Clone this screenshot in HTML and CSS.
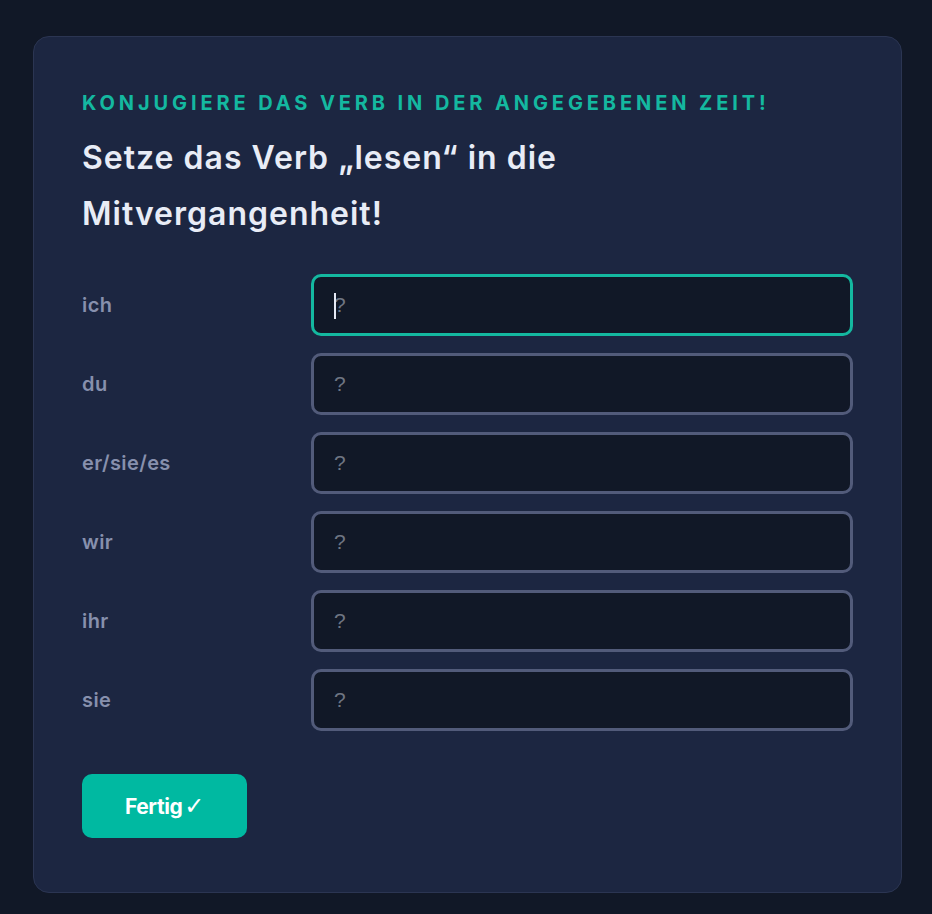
FILE: index.html
```html
<!DOCTYPE html>
<html lang="de">
<head>
    <meta charset="UTF-8">
    <meta name="viewport" content="width=device-width, initial-scale=1.0">
    <title>Konjugation</title>
    <link rel="stylesheet" href="styles.css">
</head>
<body>

    <div class="card">
        <p class="task">Konjugiere das Verb in der angegebenen Zeit!</p>
        <h1 class="question">Setze das Verb „lesen“ in die Mitvergangenheit!</h1>

        <form class="forms">
            <label for="f1" class="person">ich</label>
            <div class="field active"><span class="caret"></span><input type="text" id="f1" placeholder="?"></div>

            <label for="f2" class="person">du</label>
            <div class="field"><input type="text" id="f2" placeholder="?"></div>

            <label for="f3" class="person">er/sie/es</label>
            <div class="field"><input type="text" id="f3" placeholder="?"></div>

            <label for="f4" class="person">wir</label>
            <div class="field"><input type="text" id="f4" placeholder="?"></div>

            <label for="f5" class="person">ihr</label>
            <div class="field"><input type="text" id="f5" placeholder="?"></div>

            <label for="f6" class="person">sie</label>
            <div class="field"><input type="text" id="f6" placeholder="?"></div>
        </form>

        <button type="button" class="done">Fertig<span class="tick">✓</span></button>
    </div>

</body>
</html>
```

FILE: styles.css
```css
* {
    margin: 0;
    padding: 0;
    box-sizing: border-box;
}

body {
    font-family: Inter, 'Noto Sans', sans-serif;
    background-color: #111827;
    color: #e5e9f5;
    padding: 36px 30px 21px 33px;
}

.card {
    background-color: #1c2641;
    border: 1px solid #2b3552;
    border-radius: 16px;
    padding: 52px 48px 54px;
}

.task {
    font-size: 20px;
    line-height: 28px;
    font-weight: 700;
    letter-spacing: 3.9px;
    text-transform: uppercase;
    color: #14b8a0;
}

.question {
    margin-top: 13px;
    font-size: 32px;
    line-height: 56px;
    font-weight: 600;
    letter-spacing: 1px;
    color: #e8ecf6;
    max-width: 560px;
}

.forms {
    margin-top: 32px;
    display: grid;
    grid-template-columns: 229px 1fr;
    grid-auto-rows: 62px;
    row-gap: 17px;
    align-items: center;
}

.person {
    font-size: 20px;
    font-weight: 600;
    letter-spacing: 0.4px;
    color: #8790ad;
}

.field {
    position: relative;
    height: 62px;
}

.field input {
    width: 100%;
    height: 100%;
    background-color: #111827;
    border: 3px solid #525b7a;
    border-radius: 10px;
    padding: 0 20px;
    font-family: 'Liberation Sans', Arial, sans-serif;
    font-size: 21px;
    color: #e5e9f5;
    outline: none;
}

.field input::placeholder {
    color: #6f7583;
}

.field.active input {
    border-color: #14b8a0;
}

.caret {
    position: absolute;
    left: 23px;
    top: 19px;
    width: 2px;
    height: 26px;
    background-color: #e5e9f5;
}

.done {
    margin-top: 43px;
    width: 165px;
    height: 64px;
    border: none;
    border-radius: 10px;
    background-color: #00b9a1;
    color: #ffffff;
    font-family: Inter, 'Noto Sans', sans-serif;
    font-size: 21px;
    font-weight: 700;
    letter-spacing: -0.4px;
    cursor: pointer;
}

.tick {
    font-family: 'DejaVu Sans', sans-serif;
    font-weight: 700;
    font-size: 24px;
    margin-left: 2px;
}
```
